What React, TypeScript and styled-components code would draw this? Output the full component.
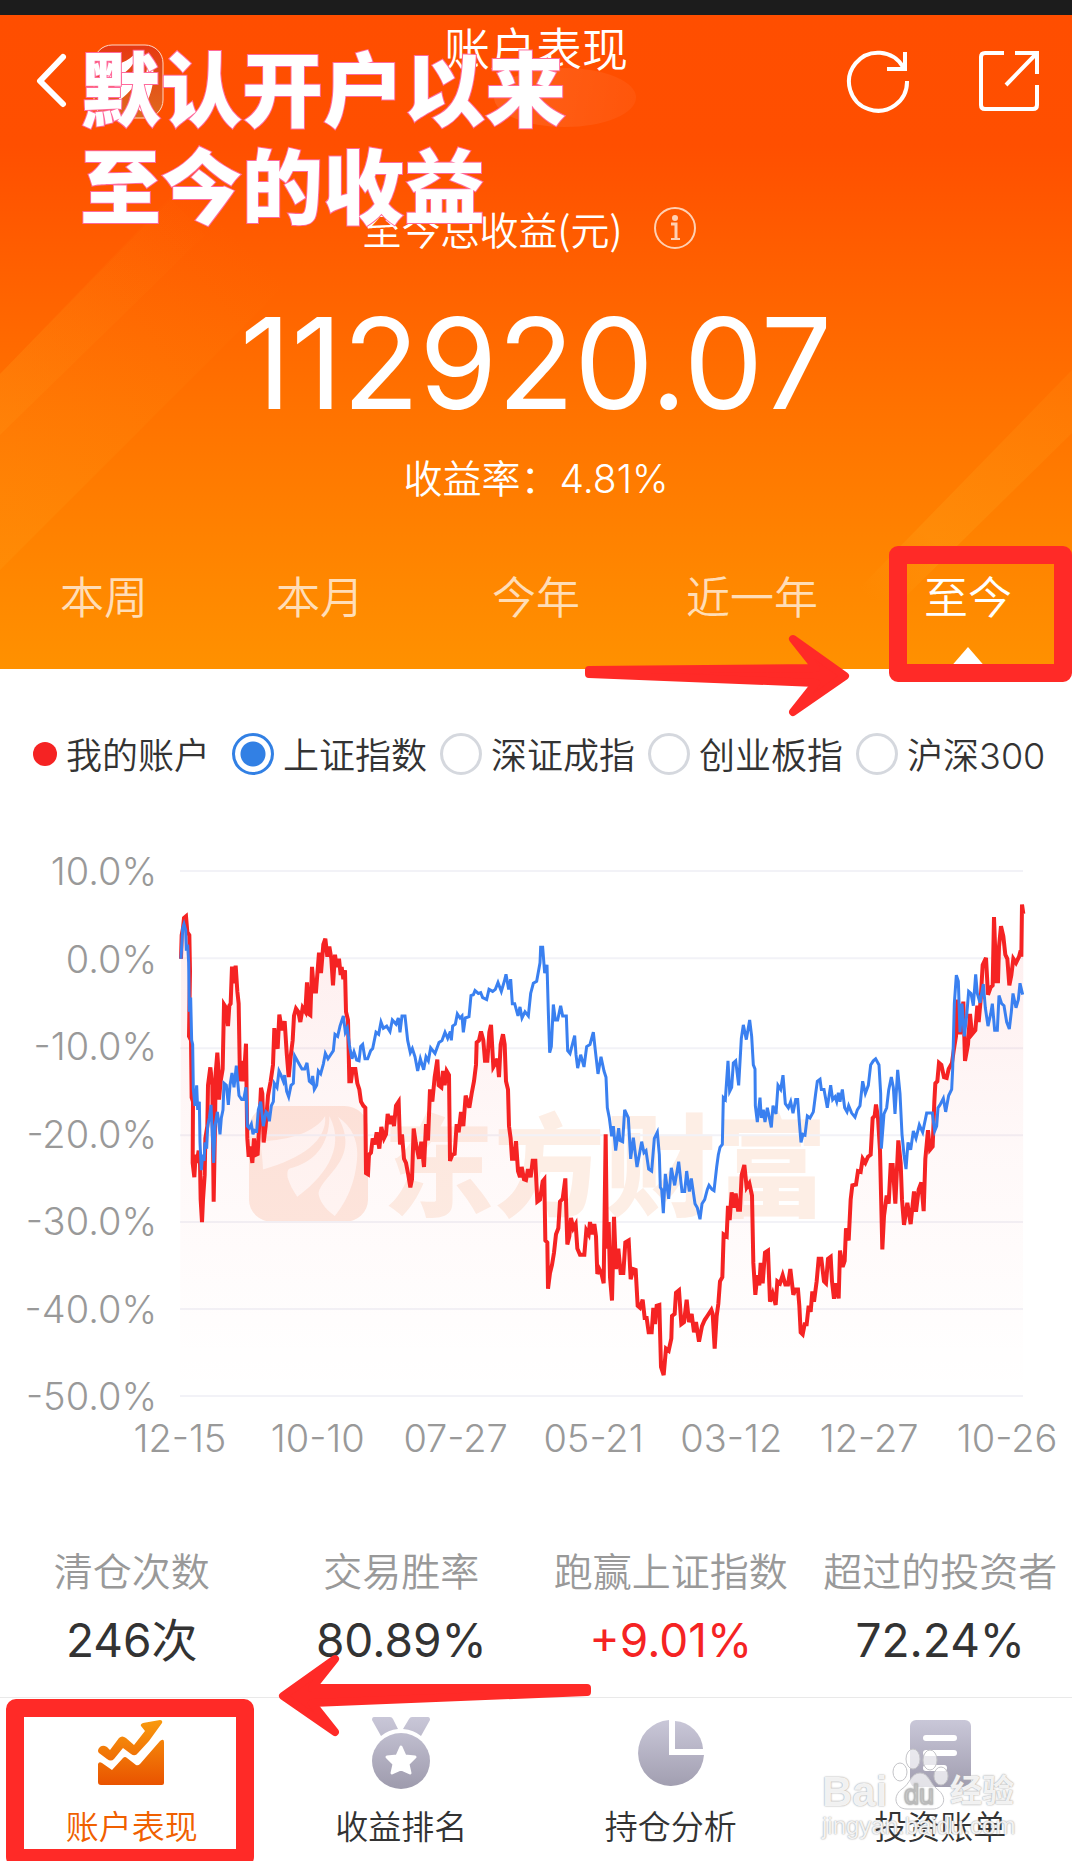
import React from "react";
import styled, { createGlobalStyle } from "styled-components";

const GlobalStyle = createGlobalStyle`
  * { box-sizing: border-box; }
  body {
    margin: 0;
    background: #fff;
    color: #333;
    font-family: Inter, "Noto Sans CJK SC", sans-serif;
    font-weight: 350;
  }
  button { font: inherit; color: inherit; background: none; border: 0; padding: 0; cursor: pointer; }
`;

const MARK_RED = "#ff2a27";

const Page = styled.main`
  position: relative;
  min-height: 100vh;
  overflow: hidden;
`;

const StatusBar = styled.div`
  height: 15px;
  background: #1c1c1c;
`;

const Header = styled.header`
  position: relative;
  color: #fff;
  background: linear-gradient(180deg, #ff4e00 0%, #ff4f00 20%, #ff5f00 38%, #ff7200 60%, #ff8200 80%, #ff9100 100%);
`;

const Beams = styled.svg`
  position: absolute;
  inset: 0;
  width: 100%;
  height: 100%;
`;

const HeaderBody = styled.div`
  position: relative;
  display: flex;
  flex-direction: column;
`;

const NavBar = styled.div`
  display: grid;
  grid-template-columns: 1fr auto 1fr;
  align-items: center;
  height: 132px;
  padding: 0 31px;
`;

const Title = styled.h1`
  align-self: start;
  margin: 4px 0 0;
  font-size: 46px;
  line-height: 60px;
  font-weight: 350;
`;

const IconButton = styled.button`
  display: flex;
  justify-self: start;
`;

const Actions = styled.div`
  display: flex;
  justify-content: flex-end;
  gap: 66px;
`;

const TotalLabel = styled.div`
  display: flex;
  justify-content: center;
  align-items: center;
  gap: 32px;
  margin-top: 57px;
  padding-right: 13px;
  font-family: "Noto Sans CJK SC", sans-serif;
  font-size: 39px;
  line-height: 48px;
`;

const Total = styled.div`
  margin-top: 51px;
  text-align: center;
  font-size: 126px;
  line-height: 120px;
  font-weight: 400;
`;

const Rate = styled.div`
  margin-top: 32px;
  text-align: center;
  font-size: 39px;
  line-height: 48px;
`;

const Tabs = styled.div`
  display: grid;
  grid-template-columns: repeat(5, 1fr);
  margin: 24px -4px 0;
`;

const Tab = styled.button<{ $active?: boolean }>`
  position: relative;
  height: 142px;
  padding-bottom: 6px;
  font-size: 44px;
  color: ${(p) => (p.$active ? "#fff" : "rgba(255, 255, 255, 0.72)")};

  &::after {
    content: "";
    display: ${(p) => (p.$active ? "block" : "none")};
    position: absolute;
    left: 50%;
    bottom: 0;
    width: 38px;
    height: 22px;
    margin-left: -19px;
    background: #fff;
    clip-path: polygon(50% 0, 100% 100%, 0 100%);
  }
`;

const TabMark = styled.div`
  position: absolute;
  right: 0;
  bottom: -13px;
  width: 183px;
  height: 136px;
  border: 18px solid ${MARK_RED};
  border-radius: 9px;
`;

const AppBadge = styled.svg`
  position: absolute;
  left: 93px;
  top: 29px;
`;

const Glow = styled.div`
  position: absolute;
  left: 494px;
  top: 53px;
  width: 142px;
  height: 59px;
  border-radius: 50%;
  background: linear-gradient(100deg, rgba(255, 255, 255, 0.1), rgba(255, 255, 255, 0.04));
`;

const Caption = styled.p`
  position: absolute;
  left: 80px;
  top: 21px;
  margin: 0;
  font-family: "Noto Sans CJK SC", sans-serif;
  font-size: 81px;
  line-height: 97px;
  font-weight: 900;
  color: #fff;
  white-space: pre;
  -webkit-text-stroke: 2px #ff6a9c;
  paint-order: stroke fill;
`;

const Legend = styled.fieldset`
  display: flex;
  align-items: center;
  gap: 13px;
  margin: 0;
  border: 0;
  padding: 61px 0 0 33px;
  font-size: 36px;
  line-height: 48px;
`;

const LegendItem = styled.label`
  display: flex;
  align-items: center;
  gap: 9px;
  white-space: nowrap;
`;

const LegendText = styled.span`
  padding-top: 4px;
  line-height: 44px;
`;

const OwnAccount = styled(LegendItem).attrs({ as: "span" })`
  margin-right: 9px;
`;

const Dot = styled.span`
  width: 24px;
  height: 24px;
  border-radius: 50%;
  background: #f52323;
`;

const Radio = styled.input`
  appearance: none;
  width: 42px;
  height: 42px;
  margin: 0;
  border: 3px solid #d5d8de;
  border-radius: 50%;

  &:checked {
    border-color: #3280e4;
    background: radial-gradient(circle, #3280e4 12px, transparent 13px);
  }
`;

const Chart = styled.section`
  margin-top: 93px;
  color: #999;
  font-size: 38px;
  line-height: 48px;
`;

const PlotRow = styled.div`
  display: flex;
  padding-right: 49px;
`;

const YAxis = styled.div`
  display: flex;
  flex-direction: column;
  justify-content: space-between;
  width: 157px;
  margin: -24px 23px -24px 0;
  text-align: right;
`;

const Plot = styled.div`
  position: relative;
  flex: 1;
  height: 525px;
`;

const Lines = styled.svg`
  position: relative;
  display: block;
  width: 100%;
  height: 100%;
  overflow: visible;
`;

const Brand = styled.div`
  position: absolute;
  left: 69px;
  top: 235px;
  display: flex;
  align-items: center;
  gap: 15px;
  color: #fdeee5;
  font-family: "Noto Sans CJK SC", sans-serif;
  font-size: 111px;
  line-height: 108px;
  font-weight: 900;
  white-space: nowrap;
`;

const BrandName = styled.span`
  padding-bottom: 8px;
`;

const XAxis = styled.div`
  display: grid;
  grid-template-columns: repeat(7, 1fr);
  margin: 18px -4px 0 111px;
  text-align: center;
`;

const Stats = styled.dl`
  display: grid;
  grid-template-columns: repeat(4, 1fr);
  margin: 86px -3px 0;
  padding-bottom: 29px;
  text-align: center;
`;

const StatName = styled.dt`
  color: #999;
  font-size: 39px;
  line-height: 48px;
`;

const StatValue = styled.dd<{ $up?: boolean }>`
  margin: 16px 0 0;
  color: ${(p) => (p.$up ? "#f52323" : "#333")};
  font-size: 46px;
  line-height: 56px;
  font-weight: 400;
`;

const BottomNav = styled.nav`
  position: relative;
  border-top: 1px solid #e9e9e9;
`;

const NavList = styled.div`
  display: grid;
  grid-template-columns: repeat(4, 1fr);
  margin: 0 -3px;
`;

const NavItem = styled.a<{ $active?: boolean }>`
  display: flex;
  flex-direction: column;
  align-items: center;
  padding: 17px 0 14px;
  color: ${(p) => (p.$active ? "#f06000" : "#333")};
  font-size: 33px;
  line-height: 40px;
  text-decoration: none;
`;

const NavIcon = styled.span`
  display: flex;
  align-items: center;
  height: 76px;
  margin-bottom: 16px;
`;

const NavMark = styled.div`
  position: absolute;
  left: 6px;
  top: 1px;
  width: 248px;
  height: 168px;
  border: 18px solid ${MARK_RED};
  border-radius: 10px;
`;

const Pointer = styled.svg<{ $left: number; $top: number }>`
  position: absolute;
  left: ${(p) => p.$left}px;
  top: ${(p) => p.$top}px;
  fill: ${MARK_RED};
  stroke: ${MARK_RED};
  stroke-width: 8;
  stroke-linejoin: round;
`;

const Source = styled.div`
  position: absolute;
  right: 58px;
  bottom: 21px;
  width: 192px;
  color: rgba(255, 255, 255, 0.85);
  font-family: "Liberation Sans", "Noto Sans CJK SC", sans-serif;
  font-weight: 700;
  text-shadow: 0 0 2px #aaa, 0 0 1px #bbb;
`;

const SourceName = styled.div`
  display: flex;
  align-items: flex-end;
  justify-content: space-between;
  font-size: 42px;
  line-height: 40px;
`;

const SourceSuffix = styled.span`
  font-size: 32px;
  line-height: 42px;
`;

const SourceHost = styled.div`
  font-size: 24px;
  line-height: 28px;
  font-weight: 400;
`;

const Paw = styled.svg`
  margin: 0 0 3px;
  overflow: visible;
`;

/* Sample points of the two curves, in runs with their own x origin. */
type Run = [number, string];

const ACCOUNT: Run[] = [
  [0, "543,290 545,232 549,215 552,190 558,186 562,225 568,232 570,320 567,480 573,490 575,630 579,640 578,790 583,825 587,770 590,790 596,760 600,790 602,880 606,935 609,880 614,820 616,730 622,700 624,600 631,556 637,600 641,885 645,700 647,570 652,520 655,560 657,635 662,590 668,560 672,402 678,410 684,455 688,405 692,400 696,309 701,350 707,307 712,370 716,400 720,590 726,540 731,590 738,498 741,690 742,730 746,775 751,750 757,790 762,730 768,770 773,768 778,690 783,606 787,620 791,740 797,700 804,625 812,590 819,550 823,460 828,500 833,510 838,427 846,465 854,443 860,520 866,580 872,530 878,490 882,430 888,412 895,420 901,445 908,410 916,420 921,348 926,425 931,428 936,310 942,370 948,370 957,275 963,325 970,255 976,241 982,285 988,260 994,290 999,355 1005,280 1010,310 1017,290 1022,330"],
  [1020, "5,310 10,340 15,318 18,420 24,440 28,590 33,590 38,560 46,560 52,595 58,610 63,640 70,650 76,655 78,815 84,818 87,770 93,765 98,730 104,745 110,715 118,755 124,702 132,730 138,720 143,670 150,695 156,675 162,700 168,650 176,640 180,745 186,720 192,780 198,790 205,820 211,850 216,830 221,706 227,740 237,780 244,738 252,800 258,695 264,735 270,610 277,640 284,580 292,537 296,600 304,605 309,565 314,600 320,565 327,575 330,785 337,770 344,768 350,695 356,715 363,665 370,700 377,625 388,655 395,620 402,590 408,550 410,495 417,490 423,468 430,490 435,540 442,540 448,470 453,452 460,555 467,545 472,535 477,580 482,500 489,475 494,500 498,590 504,610 507,700 512,730 516,780 522,780 528,737 534,810 540,825 545,800 552,830 558,832 564,805 572,825 578,785 586,785 592,885 600,880 608,835 613,830 616,980 622,985 624,1098 630,1060 636,1040 642,1010 648,965 655,950 660,885 668,878 676,828 682,990 688,970 693,925 700,950 707,940 712,1000 720,1015 733,1015 739,955 746,965 750,935 757,965 763,940 768,970 772,1062 778,1050 784,1060 791,1085 797,720 801,1000 806,935 810,1070 816,1127 822,922 828,1050 835,1000 842,1060 850,1060 856,985 866,980 872,1075 880,1050 887,1052 893,1140 900,1145 908,1125 914,1170 920,1170 926,1205 935,1205 940,1145 945,1185 950,1140 958,1138 963,1290 971,1310 978,1245 986,1250 994,1220 996,1165 1004,1160 1008,1108 1017,1102 1024,1185 1032,1180 1040,1125 1047,1180 1055,1160 1062,1205 1068,1180 1077,1228"],
  [2100, "6,1190 14,1175 22,1165 34,1150 38,1160 44,1245 50,1165 55,1135 60,1080 67,1070 71,965 80,970 84,895 89,930 95,862 101,900 107,865 114,905 120,905 125,820 133,795 140,850 148,840 156,870 160,1035 166,1113 172,1065 178,1090 182,1035 188,1085 195,1010 204,1005 210,1130 218,1110 227,1138 232,1080 240,1085 248,1065 256,1088 264,1088 271,1050 280,1113 286,1100 294,1100 298,1140 302,1205 308,1210 314,1185 320,1185 326,1140 332,1155 337,1105 342,1130 350,1080 356,1025 364,1025 372,1080 378,1085 384,1025 392,1020 396,1080 402,1123 408,1085 416,1122 420,1005 428,1045 434,1030 438,950 446,980 452,880 457,845 468,843 474,810 482,812 488,780 496,790 504,775 512,770 518,680 524,675 528,647 534,680 540,760 547,1002 552,920 560,870 566,890 572,795 578,795 586,890 595,735 602,790 606,880 612,942 622,888 632,940 642,860 648,910 656,855 664,838 671,908 676,780 684,710 690,758 698,750 703,640 706,595 712,590 717,545 724,550 732,580 740,582 746,560 756,545 762,510 768,480 772,390 780,475 790,395 795,540 804,500 810,425 816,475 826,465 832,405 836,445 842,390 848,305 858,288 864,378 872,360 878,355 882,188 889,345 894,345 897,260 903,210 910,235 916,280 922,290 928,355 934,330 940,290 948,300 957,285 962,270 964,285 966,157 970,180"],
];

const SHANGHAI: Run[] = [
  [0, "543,290 548,215 552,205 557,220 559,270 563,255 566,300 568,420 572,385 575,490 578,500 580,610 585,650 590,600 593,660 598,640 600,740 604,808 608,770 612,785 615,740 620,755 623,700 628,680 633,648 638,740 641,790 645,700 652,665 656,690 660,720 664,680 669,660 672,595 679,600 685,648 690,600 696,570 702,605 709,552 713,590 717,625 725,635 731,635 738,605 742,700 748,705 754,695 759,720 763,710 770,712 775,660 782,640 790,700 798,665 804,670 808,688 814,650 820,640 823,595 831,605 837,565 843,575 850,590 854,575 860,615 866,628 873,600 880,595 884,528 892,540 899,550 906,560 914,560 921,545 928,590 935,595 938,577 943,610 950,600 955,565 962,572 970,548 976,522 984,535 992,525 1000,515 1005,475 1013,480 1020,455 1030,430 1036,470 1042,460 1048,500"],
  [1020, "30,510 36,535 42,518 50,538 57,540 62,505 68,500 75,535 83,535 92,515 98,510 108,470 116,475 123,445 130,460 140,455 150,468 157,440 168,450 175,435 180,470 186,430 195,430 203,490 211,520 217,510 225,530 233,565 241,535 251,562 258,530 265,540 272,508 285,522 297,495 306,490 315,470 323,485 331,468 334,490 338,455 346,450 352,425 360,435 366,430 370,470 376,435 387,432 393,380 400,378 405,368 415,375 422,373 428,385 440,390 447,365 458,370 466,365 474,348 484,370 493,345 498,328 506,365 512,340 517,400 524,400 534,430 540,408 546,435 555,420 565,430 572,375 580,350 590,345 600,300 602,262 608,262 614,325 621,305 625,420 629,520 634,505 640,402 646,440 653,440 662,405 668,430 679,430 683,515 690,522 697,500 704,478 708,525 713,558 722,525 732,555 740,505 750,500 760,470 766,515 774,572 783,530 792,565 798,580 802,655 808,680 815,725 820,700 827,760 836,705 840,735 848,738 854,660 865,680 872,780 880,728 891,800 898,770 905,738 912,765 918,760 926,805 935,810 943,730 952,715 958,770 961,850 965,855 970,913 976,817 986,878 994,802 1004,845 1016,787 1026,860 1034,860 1040,810 1048,860 1054,828 1065,890 1072,900 1080,928"],
  [2100, "6,890 14,880 22,855 27,845 36,855 42,858 50,800 55,770 60,752 67,745 70,630 76,635 84,540 89,615 95,605 100,545 107,540 116,600 124,485 130,452 139,488 149,440 155,480 160,550 165,560 166,650 172,690 180,630 184,680 190,660 195,690 202,655 214,703 219,650 228,670 234,600 242,610 249,575 256,645 265,655 272,640 279,668 287,635 293,635 298,690 303,740 309,720 315,722 322,675 330,680 340,665 347,620 352,590 360,585 364,610 372,610 382,655 392,600 398,635 405,628 410,640 415,618 420,640 427,610 434,655 441,665 446,650 455,668 465,678 472,660 480,650 488,590 496,620 505,600 512,550 520,540 527,535 537,550 542,620 544,755 552,670 560,655 566,612 574,580 580,605 585,670 593,562 600,620 606,720 612,770 618,805 624,740 632,758 640,712 648,730 658,697 668,715 680,668 690,668 697,668 704,712 710,700 714,655 720,648 730,632 737,665 746,625 755,610 758,560 763,400 769,330 775,345 780,470 786,400 793,480 800,430 806,370 813,375 820,405 827,328 832,375 840,398 850,352 856,410 864,455 872,425 877,400 884,465 892,465 897,380 905,400 912,405 920,445 928,462 934,420 939,375 948,410 955,390 960,350 968,378"],
];

const joinRuns = (runs: Run[]) =>
  runs
    .flatMap(([origin, points]) =>
      points.split(" ").map((point) => {
        const [x, y] = point.split(",").map(Number);
        return `${x + origin},${y}`;
      })
    )
    .join(" ");

const account = joinRuns(ACCOUNT);
const shanghai = joinRuns(SHANGHAI);

const GRID = [75, 289, 509, 722, 935, 1148, 1361];
const PERCENTS = ["10.0%", "0.0%", "-10.0%", "-20.0%", "-30.0%", "-40.0%", "-50.0%"];
const DATES = ["12-15", "10-10", "07-27", "05-21", "03-12", "12-27", "10-26"];
const PERIODS = ["本周", "本月", "今年", "近一年", "至今"];
const INDEXES = ["上证指数", "深证成指", "创业板指", "沪深300"];
const STATS = [
  { name: "清仓次数", value: "246次" },
  { name: "交易胜率", value: "80.89%" },
  { name: "跑赢上证指数", value: "+9.01%", up: true },
  { name: "超过的投资者", value: "72.24%" },
];

const Swooshes = () => (
  <>
    <path d="M11 35C38 34 62 26 71 10C73 34 50 52 13 63C13 52 11 44 11 35Z" />
    <path d="M75 10C75 40 60 56 38 62C35 64 36 68 36 71C38 78 41 84 45 90C66 74 92 44 75 10Z" />
    <path d="M83 11C96 20 101 34 101 48C100 76 90 96 80 109C74 104 67 98 65 88C65 70 106 54 83 11Z" />
  </>
);

const PerformanceIcon = () => (
  <svg width="67" height="66" viewBox="0 0 67 66">
    <defs>
      <linearGradient id="warm" gradientUnits="userSpaceOnUse" x1="0" y1="0" x2="0" y2="66">
        <stop offset="0" stopColor="#f99a0e" />
        <stop offset="1" stopColor="#e95200" />
      </linearGradient>
    </defs>
    <g fill="url(#warm)">
      <path d="M1 28Q4 24 9 27L12 30L21 18Q24 15 28 18L36 25L47 11L43 6Q42 4 45 3L62 0Q65 0 64 3L51 21L40 33Q37 37 33 34L25 28L16 39Q13 42 9 39L1 33Q-1 31 1 28Z" />
      <path d="M0 44Q1 41 4 43L14 50L25 38Q27 36 29 38L38 45Q40 46 42 44L62 21Q66 18 66 22V63Q66 65 64 65H3Q0 65 0 62Z" />
    </g>
  </svg>
);

const CoolGradient = ({ id }: { id: string }) => (
  <linearGradient id={id} gradientUnits="userSpaceOnUse" x1="0" y1="0" x2="0" y2="70">
    <stop offset="0" stopColor="#c9c7d8" />
    <stop offset="1" stopColor="#9f9cae" />
  </linearGradient>
);

const RankIcon = () => (
  <svg width="58" height="73" viewBox="0 0 58 73">
    <defs><CoolGradient id="cool-rank" /></defs>
    <g fill="url(#cool-rank)">
      <path d="M2 0H18Q20 0 21 2L26 12Q16 13 9 19L0 3Q0 0 2 0Z" />
      <path d="M56 0H40Q38 0 37 2L31 12Q42 13 49 19L58 3Q58 0 56 0Z" />
      <ellipse cx="29" cy="44" rx="29" ry="28" />
    </g>
    <path d="M29 30L33 39L43 40L36 47L38 56L29 52L20 56L22 47L15 40L25 39Z" fill="#fff" stroke="#fff" strokeWidth="3" strokeLinejoin="round" />
  </svg>
);

const PieIcon = () => (
  <svg width="66" height="67" viewBox="0 0 66 67">
    <defs><CoolGradient id="cool-pie" /></defs>
    <g fill="url(#cool-pie)">
      <path d="M31 0V35H66A33 33 0 1 1 31 0Z" />
      <path d="M37 1V29H65A30 30 0 0 0 37 1Z" />
    </g>
  </svg>
);

const BillIcon = () => (
  <svg width="61" height="67" viewBox="0 0 61 67">
    <defs><CoolGradient id="cool-bill" /></defs>
    <rect width="61" height="67" rx="6" fill="url(#cool-bill)" />
    <path d="M16 18H44M16 33H44M16 48H34" stroke="#fff" strokeWidth="6" strokeLinecap="round" />
  </svg>
);

const NAV = [
  { name: "账户表现", icon: <PerformanceIcon />, active: true },
  { name: "收益排名", icon: <RankIcon /> },
  { name: "持仓分析", icon: <PieIcon /> },
  { name: "投资账单", icon: <BillIcon /> },
];

export default function App() {
  return (
    <Page>
      <GlobalStyle />
      <StatusBar />
      <Header>
        <Beams viewBox="0 0 1072 654" preserveAspectRatio="none">
          <defs>
            <linearGradient id="beam-left" gradientUnits="userSpaceOnUse" x1="0" y1="480" x2="250" y2="230">
              <stop offset="0" stopColor="#ffa81e" stopOpacity="0.16" />
              <stop offset="1" stopColor="#ffa81e" stopOpacity="0" />
            </linearGradient>
            <linearGradient id="beam-right" gradientUnits="userSpaceOnUse" x1="1072" y1="380" x2="875" y2="590">
              <stop offset="0" stopColor="#ffa81e" stopOpacity="0.12" />
              <stop offset="0.7" stopColor="#ffa81e" stopOpacity="0.26" />
              <stop offset="1" stopColor="#ffa81e" stopOpacity="0" />
            </linearGradient>
          </defs>
          <path d="M0 359L230 120L330 225L0 555Z" fill="url(#beam-left)" />
          <path d="M0 359L171 184L205 220L0 420Z" fill="url(#beam-left)" />
          <path d="M1072 355V418L902 585H848Z" fill="url(#beam-right)" />
        </Beams>
        <Glow />
        <AppBadge width="71" height="75" viewBox="0 0 71 75">
          <defs>
            <linearGradient id="badge" x1="0" y1="0" x2="0" y2="1">
              <stop offset="0" stopColor="#e63812" />
              <stop offset="1" stopColor="#e06a1e" />
            </linearGradient>
          </defs>
          <rect x="1" y="1" width="69" height="73" rx="18" fill="url(#badge)" stroke="#ffd9c4" />
          <g transform="translate(0 2) scale(0.6)" fill="#fff"><Swooshes /></g>
        </AppBadge>
        <HeaderBody>
          <NavBar>
            <IconButton aria-label="返回">
              <svg width="40" height="56" viewBox="0 0 40 56" fill="none" stroke="#fff" strokeWidth="6" strokeLinecap="round" strokeLinejoin="round">
                <path d="M32 4L9 28L32 51" />
              </svg>
            </IconButton>
            <Title>账户表现</Title>
            <Actions>
              <IconButton aria-label="刷新">
                <svg width="66" height="64" viewBox="0 0 66 64" fill="none" stroke="#fff" strokeWidth="4">
                  <path d="M62 32A29 29 0 1 1 58 18" />
                  <path d="M60 3V20H42" />
                </svg>
              </IconButton>
              <IconButton aria-label="分享">
                <svg width="64" height="64" viewBox="0 0 64 64" fill="none" stroke="#fff" strokeWidth="4">
                  <path d="M27 4H8Q4 4 4 8V56Q4 60 8 60H56Q60 60 60 56V36" />
                  <path d="M38 4H60V25M60 4L29 36" />
                </svg>
              </IconButton>
            </Actions>
          </NavBar>
          <TotalLabel>
            至今总收益(元)
            <IconButton aria-label="说明">
              <svg width="42" height="42" viewBox="0 0 42 42" fill="none" stroke="#ffd0b3" strokeWidth="2">
                <circle cx="21" cy="21" r="20" />
                <circle cx="21" cy="11" r="2" fill="#ffd0b3" />
                <path d="M17 17H22V32" strokeWidth="3" />
                <path d="M17 32H26" />
              </svg>
            </IconButton>
          </TotalLabel>
          <Total>112920.07</Total>
          <Rate>收益率：4.81%</Rate>
          <Tabs role="tablist">
            {PERIODS.map((period) => (
              <Tab key={period} role="tab" $active={period === "至今"}>{period}</Tab>
            ))}
          </Tabs>
        </HeaderBody>
        <Caption>{"默认开户以来\n至今的收益"}</Caption>
        <TabMark />
      </Header>

      <Legend>
        <OwnAccount><Dot /><LegendText>我的账户</LegendText></OwnAccount>
        {INDEXES.map((name, i) => (
          <LegendItem key={name}>
            <Radio type="radio" name="index" defaultChecked={i === 0} />
            <LegendText>{name}</LegendText>
          </LegendItem>
        ))}
      </Legend>

      <Chart>
        <PlotRow>
          <YAxis>{PERCENTS.map((p) => <span key={p}>{p}</span>)}</YAxis>
          <Plot>
            <Brand>
              <svg width="119" height="116" viewBox="0 0 111 115" preserveAspectRatio="none">
                <rect width="111" height="115" rx="22" fill="#fde8df" />
                <g fill="#fff8f6"><Swooshes /></g>
              </svg>
              <BrandName>东方财富</BrandName>
            </Brand>
            <Lines viewBox="540 75 2529 1286" preserveAspectRatio="none" fill="none">
              <defs>
                <linearGradient id="area" x1="0" y1="0" x2="0" y2="1">
                  <stop offset="0" stopColor="#f52323" stopOpacity="0.08" />
                  <stop offset="0.5" stopColor="#f52323" stopOpacity="0.03" />
                  <stop offset="1" stopColor="#f52323" stopOpacity="0" />
                </linearGradient>
              </defs>
              {GRID.map((y) => (
                <path key={y} d={`M540 ${y}H3069`} stroke="#f2f2f7" strokeWidth="2" vectorEffect="non-scaling-stroke" />
              ))}
              <polygon points={`540,1361 ${account} 3069,1361`} fill="url(#area)" />
              <polyline points={account} stroke="#f52323" strokeWidth="4" vectorEffect="non-scaling-stroke" />
              <polyline points={shanghai} stroke="#3a80f0" strokeWidth="3" vectorEffect="non-scaling-stroke" />
            </Lines>
          </Plot>
        </PlotRow>
        <XAxis>{DATES.map((d) => <span key={d}>{d}</span>)}</XAxis>
      </Chart>

      <Stats>
        {STATS.map((s) => (
          <div key={s.name}>
            <StatName>{s.name}</StatName>
            <StatValue $up={s.up}>{s.value}</StatValue>
          </div>
        ))}
      </Stats>

      <BottomNav>
        <NavList>
          {NAV.map((item) => (
            <NavItem key={item.name} href="#" $active={item.active}>
              <NavIcon>{item.icon}</NavIcon>
              {item.name}
            </NavItem>
          ))}
        </NavList>
        <NavMark />
        <Source>
          <SourceName>
            Bai
            <Paw width="50" height="56" viewBox="0 0 50 56" fill="#fff" fillOpacity="0.7" stroke="#c4c4c8" strokeWidth="1">
              <ellipse cx="6" cy="19" rx="7" ry="9" />
              <ellipse cx="19" cy="6" rx="7" ry="10" />
              <ellipse cx="36" cy="7" rx="7" ry="10" />
              <ellipse cx="47" cy="23" rx="7" ry="9" />
              <path d="M26 20C35 20 36 31 43 36C55 45 49 56 39 56H13C1 56 -2 43 8 36C16 31 17 20 26 20Z" />
              <text x="10" y="51" fontSize="27" fontWeight="400" stroke="#bbb">du</text>
            </Paw>
            <SourceSuffix>经验</SourceSuffix>
          </SourceName>
          <SourceHost>jingyan.baidu.com</SourceHost>
        </Source>
      </BottomNav>

      <Pointer $left={579} $top={630} width="274" height="90" viewBox="579 630 274 90">
        <path d="M589 670L816 668L793 639L845 676L793 712L816 683L589 674Z" />
      </Pointer>
      <Pointer $left={275} $top={1651} width="322" height="90" viewBox="275 1651 322 90">
        <path d="M587 1688H312L335 1659L283 1696L335 1732L312 1703L587 1692Z" />
      </Pointer>
    </Page>
  );
}
